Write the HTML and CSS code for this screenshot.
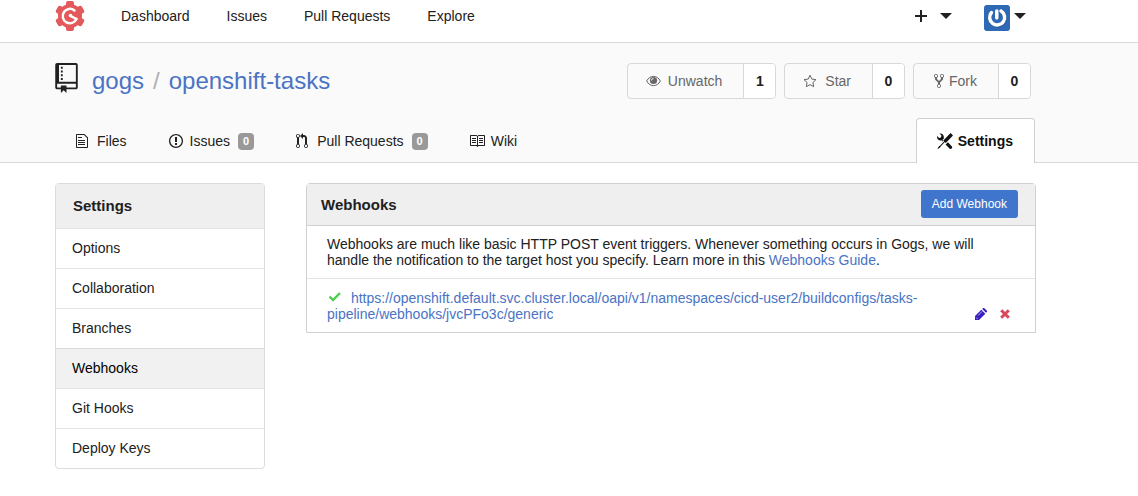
FILE: index.html
```
<!DOCTYPE html>
<html lang="en">
<head>
  <meta charset="UTF-8" />
  <meta name="viewport" content="width=device-width,initial-scale=1" />
  <title>Webhooks - gogs/openshift-tasks - Gogs</title>
  <link rel="stylesheet" href="styles.css">
</head>
<body>
  <nav class="topbar">
    <div class="container topbar-inner">
      <a href="#" class="brand" aria-label="Gogs">
        <svg width="30" height="30" viewBox="0 0 30 30">
          <g fill="#e25a5b">
            <circle cx="15" cy="15" r="12" />
            <rect x="11" width="8" height="30" rx="2" />
            <rect x="11" width="8" height="30" rx="2" transform="rotate(60 15 15)" />
            <rect x="11" width="8" height="30" rx="2" transform="rotate(120 15 15)" />
          </g>
          <path fill="none" stroke="#fff" stroke-width="2.500" stroke-linecap="round" d="M19.500 9.500a7.200 7.200 0 1 0 2 8.500L15.500 15" />
          <circle cx="15.500" cy="14.500" r="1.800" fill="#fff" />
        </svg>
      </a>
      <a href="#" class="nav-link">Dashboard</a>
      <a href="#" class="nav-link">Issues</a>
      <a href="#" class="nav-link">Pull Requests</a>
      <a href="#" class="nav-link">Explore</a>
      <div class="topbar-right">
        <button class="menu-btn" aria-label="Create">
          <svg width="12" height="12" viewBox="0 0 12 12"><path d="M5 0h2v5h5v2H7v5H5V7H0V5h5z" /></svg>
          <svg class="caret" width="12" height="6" viewBox="0 0 12 6"><path d="M0 0h12L6 6z" /></svg>
        </button>
        <button class="menu-btn user-btn" aria-label="User">
          <svg class="avatar" width="26" height="26" viewBox="0 0 26 26">
            <rect width="26" height="26" rx="3" fill="#2f68b4" />
            <g fill="none" stroke-linecap="round">
              <path stroke="#20508f" stroke-width="4" opacity=".5" d="M7.500 8.500a7.500 7.500 0 1 0 10.500-1.200M13.500 6.500v7" />
              <path stroke="#fff" stroke-width="3.500" d="M7.500 7.500a7.500 7.500 0 1 0 9.500-1.500M12.800 6v7" />
            </g>
          </svg>
          <svg class="caret" width="12" height="6" viewBox="0 0 12 6"><path d="M0 0h12L6 6z" /></svg>
        </button>
      </div>
    </div>
  </nav>

  <header class="repo-header">
    <div class="container">
      <div class="repo-top">
        <svg class="repo-icon" width="23" height="30" viewBox="0 0 12 16"><path d="M4 9H3V8h1v1zm0-3H3v1h1V6zm0-2H3v1h1V4zm0-2H3v1h1V2zm8-1v12c0 .55-.45 1-1 1H6v2l-1.500-1.500L3 16v-2H1c-.55 0-1-.45-1-1V1c0-.55.45-1 1-1h10c.55 0 1 .45 1 1zm-1 10H1v2h2v-1h3v1h5v-2zm0-10H2v9h9V1z" /></svg>
        <div class="repo-name">
          <a href="#">gogs</a>
          <span class="divider">/</span>
          <a href="#">openshift-tasks</a>
        </div>
        <div class="repo-actions">
          <div class="labeled">
            <button class="action watch">
              <svg width="15" height="12" viewBox="0 0 15 12"><path fill="none" stroke="currentColor" d="M.6 6C4-.2 11-.2 14.400 6 11 12.200 4 12.200.6 6z" /><circle cx="7.500" cy="5.500" r="3.600" /><path fill="none" stroke="#fafafa" d="M5.500 5.500a2 2 0 0 1 2-2" /></svg>
              Unwatch
            </button>
            <a href="#" class="count">1</a>
          </div>
          <div class="labeled">
            <button class="action star">
              <svg width="14" height="14" viewBox="0 0 14 14"><path fill="none" stroke="currentColor" d="M7 1.200l1.800 3.900 4.200.5-3.100 2.900.8 4.200L7 10.600l-3.700 2.100.8-4.200L1 5.600l4.200-.5z" /></svg>
              Star
            </button>
            <a href="#" class="count">0</a>
          </div>
          <div class="labeled">
            <button class="action fork">
              <svg width="10" height="16" viewBox="0 0 10 16"><path d="M8 1a1.993 1.993 0 0 0-1 3.720V6L5 8 3 6V4.720A1.993 1.993 0 0 0 2 1a1.993 1.993 0 0 0-1 3.720V6.500l3 3v1.780A1.993 1.993 0 0 0 5 15a1.993 1.993 0 0 0 1-3.720V9.500l3-3V4.720A1.993 1.993 0 0 0 8 1zM2 4.200C1.340 4.200.8 3.650.8 3c0-.65.55-1.200 1.200-1.200.65 0 1.200.55 1.200 1.200 0 .65-.55 1.200-1.200 1.200zm3 10c-.66 0-1.200-.55-1.200-1.200 0-.65.55-1.200 1.200-1.200.65 0 1.200.55 1.200 1.200 0 .65-.55 1.200-1.200 1.200zm3-10c-.66 0-1.200-.55-1.200-1.200 0-.65.55-1.200 1.200-1.200.65 0 1.200.55 1.200 1.200 0 .65-.55 1.200-1.200 1.200z" /></svg>
              Fork
            </button>
            <a href="#" class="count">0</a>
          </div>
        </div>
      </div>
      <div class="tabs">
        <a href="#" class="tab">
          <span class="tab-icon"><svg width="12" height="16" viewBox="0 0 12 16"><path d="M6 5H2V4h4v1zM2 8h7V7H2v1zm0 2h7V9H2v1zm0 2h7v-1H2v1zm10-7.500V14c0 .55-.45 1-1 1H1c-.55 0-1-.45-1-1V2c0-.55.45-1 1-1h7.500L12 4.500zM11 5L8 2H1v12h10V5z" /></svg></span>
          Files
        </a>
        <a href="#" class="tab">
          <span class="tab-icon"><svg width="14" height="16" viewBox="0 0 14 16"><path d="M7 2.300c3.140 0 5.700 2.560 5.700 5.700s-2.560 5.700-5.700 5.700A5.710 5.710 0 0 1 1.300 8c0-3.140 2.560-5.700 5.700-5.700zM7 1C3.140 1 0 4.140 0 8s3.140 7 7 7 7-3.140 7-7-3.140-7-7-7zm1 3H6v5h2V4zm0 6H6v2h2v-2z" /></svg></span>
          Issues <span class="badge">0</span>
        </a>
        <a href="#" class="tab">
          <span class="tab-icon"><svg width="12" height="16" viewBox="0 0 12 16"><path d="M11 11.280V5c-.03-.78-.34-1.470-.94-2.060C9.460 2.350 8.780 2.030 8 2H7V0L4 3l3 3V4h1c.27.02.48.11.69.31.21.2.3.42.31.69v6.280A1.993 1.993 0 0 0 10 15a1.993 1.993 0 0 0 1-3.720zm-1 2.920c-.66 0-1.200-.55-1.200-1.200 0-.65.55-1.200 1.200-1.200.65 0 1.200.55 1.200 1.200 0 .65-.55 1.200-1.200 1.200zM4 3c0-1.110-.89-2-2-2a1.993 1.993 0 0 0-1 3.720v6.560A1.993 1.993 0 0 0 2 15a1.993 1.993 0 0 0 1-3.720V4.720c.59-.34 1-.98 1-1.720zm-.8 10c0 .66-.55 1.200-1.200 1.200-.65 0-1.200-.55-1.200-1.200 0-.65.55-1.200 1.200-1.200.65 0 1.200.55 1.200 1.200zM2 4.200C1.340 4.200.8 3.650.8 3c0-.65.55-1.200 1.200-1.200.65 0 1.200.55 1.200 1.200 0 .65-.55 1.200-1.200 1.200z" /></svg></span>
          Pull Requests <span class="badge">0</span>
        </a>
        <a href="#" class="tab">
          <span class="tab-icon"><svg width="16" height="16" viewBox="1 0 16 16"><path d="M3 5h4v1H3V5zm0 3h4V7H3v1zm0 2h4V9H3v1zm11-5h-4v1h4V5zm0 2h-4v1h4V7zm0 2h-4v1h4V9zm2-6v9c0 .55-.45 1-1 1H9.500l-1 1-1-1H2c-.55 0-1-.45-1-1V3c0-.55.45-1 1-1h5.500l1 1 1-1H15c.55 0 1 .45 1 1zm-8 .5L7.500 3H2v9h6V3.500zm7-.5H9.500l-.5.5V12h6V3z" /></svg></span>
          Wiki
        </a>
        <a href="#" class="tab active">
          <span class="tab-icon"><svg width="16" height="16" viewBox="0 0 16 16"><path d="M4.480 7.270c.26.26 1.280 1.330 1.280 1.330l.56-.58-.88-.91 1.690-1.800s-.76-.74-.43-.45c.32-1.190.03-2.510-.87-3.440C4.930.5 3.660.2 2.520.51l1.930 2-.51 1.960-1.890.52-1.930-1.990C-.19 4.170.1 5.480 1 6.400c.94.98 2.290 1.260 3.480.87zm6.440 1.940l-2.330 2.300 3.840 3.980c.31.33.73.49 1.140.49.41 0 .82-.16 1.140-.49.63-.65.63-1.700 0-2.350l-3.790-3.930zM16 2.530L13.550 0 6.330 7.460l.88.91-4.310 4.460-.99.53-1.390 2.270.35.37 2.200-1.440.51-1.020L7.900 9.080l.88.91L16 2.530z" /></svg></span>
          Settings
        </a>
      </div>
    </div>
  </header>

  <main class="container content">
    <aside class="side-menu">
      <h4>Settings</h4>
      <a href="#">Options</a>
      <a href="#">Collaboration</a>
      <a href="#">Branches</a>
      <a href="#" class="active">Webhooks</a>
      <a href="#">Git Hooks</a>
      <a href="#">Deploy Keys</a>
    </aside>

    <section class="panel">
      <div class="panel-header">
        <h4>Webhooks</h4>
        <button class="add-btn">Add Webhook</button>
      </div>
      <div class="panel-row">
        Webhooks are much like basic HTTP POST event triggers. Whenever something occurs in Gogs, we will handle the notification to the target host you specify. Learn more in this <a href="#">Webhooks Guide</a>.
      </div>
      <div class="panel-row hook">
        <div class="hook-url">
          <svg class="check" width="16" height="12" viewBox="0 0 16 12"><path fill="none" stroke="#4ccf4c" stroke-width="2.400" d="M2.500 5.500l3.500 3.500L13 2" /></svg>
          <a href="#">https://openshift.default.svc.cluster.local/oapi/v1/namespaces/cicd-user2/buildconfigs/tasks-pipeline/webhooks/jvcPFo3c/generic</a>
        </div>
        <div class="hook-actions">
          <a href="#" aria-label="Edit">
            <svg width="12" height="12" viewBox="0 0 12 12"><path fill="#3a1fc0" d="M0 12V8L6.300 1.700l4 4L4 12zM7.200.9L7.900.3a1.100 1.100 0 0 1 1.500 0l2.300 2.300a1.100 1.100 0 0 1 0 1.500l-.7.700z" /><path fill="none" stroke="#b7acec" d="M1 9.500L2.500 11M3 7.500l4-4" /></svg>
          </a>
          <button class="delete-btn" aria-label="Delete">
            <svg width="10" height="10" viewBox="0 0 10 10"><path fill="none" stroke="#d9475c" stroke-width="3" d="M1.200 1.200l7.600 7.600M8.800 1.200L1.200 8.800" /></svg>
          </button>
        </div>
      </div>
    </section>
  </main>
</body>
</html>
```
FILE: styles.css
```
* {
  box-sizing: border-box;
}
body {
  margin: 0;
  font-family: "Liberation Sans", Arial, sans-serif;
  font-size: 14px;
  line-height: 16px;
  background: #fff;
  color: #212121;
}
a {
  color: #4a73c4;
  text-decoration: none;
}
button {
  font: inherit;
  color: inherit;
  background: none;
  border: none;
  padding: 0;
  cursor: pointer;
}
svg {
  display: block;
  fill: currentColor;
  flex-shrink: 0;
}
h4 {
  margin: 0;
  font-size: 15px;
}
.container {
  margin: 0 102px 0 55px;
}

/* top bar */
.topbar {
  border-bottom: 1px solid #d8d8d8;
}
.topbar-inner {
  display: flex;
  align-items: center;
  height: 42px;
  padding-bottom: 10px;
}
.brand {
  margin-right: 36px;
}
.nav-link {
  color: #212121;
  margin-right: 37px;
}
.topbar-right {
  display: flex;
  align-items: center;
  margin-left: auto;
  padding-right: 10px;
  gap: 32px;
}
.menu-btn {
  display: flex;
  align-items: center;
  gap: 13px;
}
.user-btn {
  gap: 4px;
}
.avatar {
  margin-top: 4px;
}

/* repo header */
.repo-header {
  background: #fafafa;
  border-bottom: 1px solid #d8d8d8;
}
.repo-top {
  display: flex;
  align-items: center;
  height: 75px;
}
.repo-icon {
  margin: 0 14px 6px 0;
}
.repo-name {
  display: flex;
  gap: 9px;
  font-size: 24px;
  line-height: 28px;
}
.divider {
  color: #b0b0b0;
}
.repo-actions {
  display: flex;
  gap: 8px;
  margin-left: auto;
  padding-right: 5px;
}
.labeled {
  display: flex;
  height: 36px;
  border: 1px solid #d8d8d8;
  border-radius: 4px;
  overflow: hidden;
}
.action {
  display: flex;
  align-items: center;
  gap: 8px;
  padding: 0 21px 0 18px;
  color: #666;
}
.action.watch {
  gap: 7px;
}
.action.fork {
  gap: 5px;
  padding-left: 20px;
}
.count {
  display: flex;
  align-items: center;
  justify-content: center;
  width: 32px;
  background: #fff;
  border-left: 1px solid #d8d8d8;
  color: #212121;
  font-weight: bold;
}
.tabs {
  display: flex;
  height: 44px;
}
.tab {
  display: flex;
  align-items: center;
  padding: 2px 21px 0;
  color: #212121;
}
.tab-icon {
  width: 21px;
}
.tab.active {
  margin-left: auto;
  margin-right: 1px;
  margin-bottom: -1px;
  background: #fff;
  border: 1px solid #d0d0d0;
  border-bottom: none;
  border-radius: 4px 4px 0 0;
  padding: 0 21px 0 20px;
  color: #111;
  font-weight: bold;
}
.badge {
  margin-left: 8px;
  padding: 0 5px;
  background: #999;
  border-radius: 4px;
  color: #fff;
  font-size: 11px;
  font-weight: bold;
  line-height: 17px;
}

/* settings page */
.content {
  display: flex;
  align-items: flex-start;
  gap: 41px;
  padding-top: 20px;
}
.side-menu {
  width: 210px;
  flex-shrink: 0;
  border: 1px solid #dcdcdc;
  border-radius: 4px;
  overflow: hidden;
}
.side-menu h4 {
  padding: 14px 17px;
  background: #efefef;
}
.side-menu a {
  display: block;
  padding: 11px 16px 12px;
  border-top: 1px solid #e4e4e4;
  color: #212121;
}
.side-menu a.active {
  background: #f1f1f1;
  border-top-color: #d8d8d8;
  color: #000;
}
.panel {
  flex: 1;
  min-width: 0;
  border: 1px solid #d0d0d0;
  border-radius: 4px 4px 0 0;
}
.panel-header {
  display: flex;
  align-items: center;
  justify-content: space-between;
  height: 42px;
  padding: 0 17px 0 14px;
  background: #efefef;
  border-bottom: 1px solid #d0d0d0;
}
.add-btn {
  height: 28px;
  margin-bottom: 2px;
  padding: 0 11px;
  background: #4075cd;
  border-radius: 3px;
  color: #fff;
  font-size: 12px;
}
.panel-row {
  padding: 10px 20px;
}
.hook {
  display: flex;
  align-items: flex-end;
  justify-content: space-between;
  border-top: 1px solid #e4e4e4;
  padding: 11px 25px 10px 20px;
}
.hook-url {
  flex: 1;
}
.check {
  display: inline-block;
  margin-right: 4px;
}
.hook-actions {
  display: flex;
  align-items: center;
  gap: 13px;
  padding: 2px 0;
  margin-left: 20px;
}
```
